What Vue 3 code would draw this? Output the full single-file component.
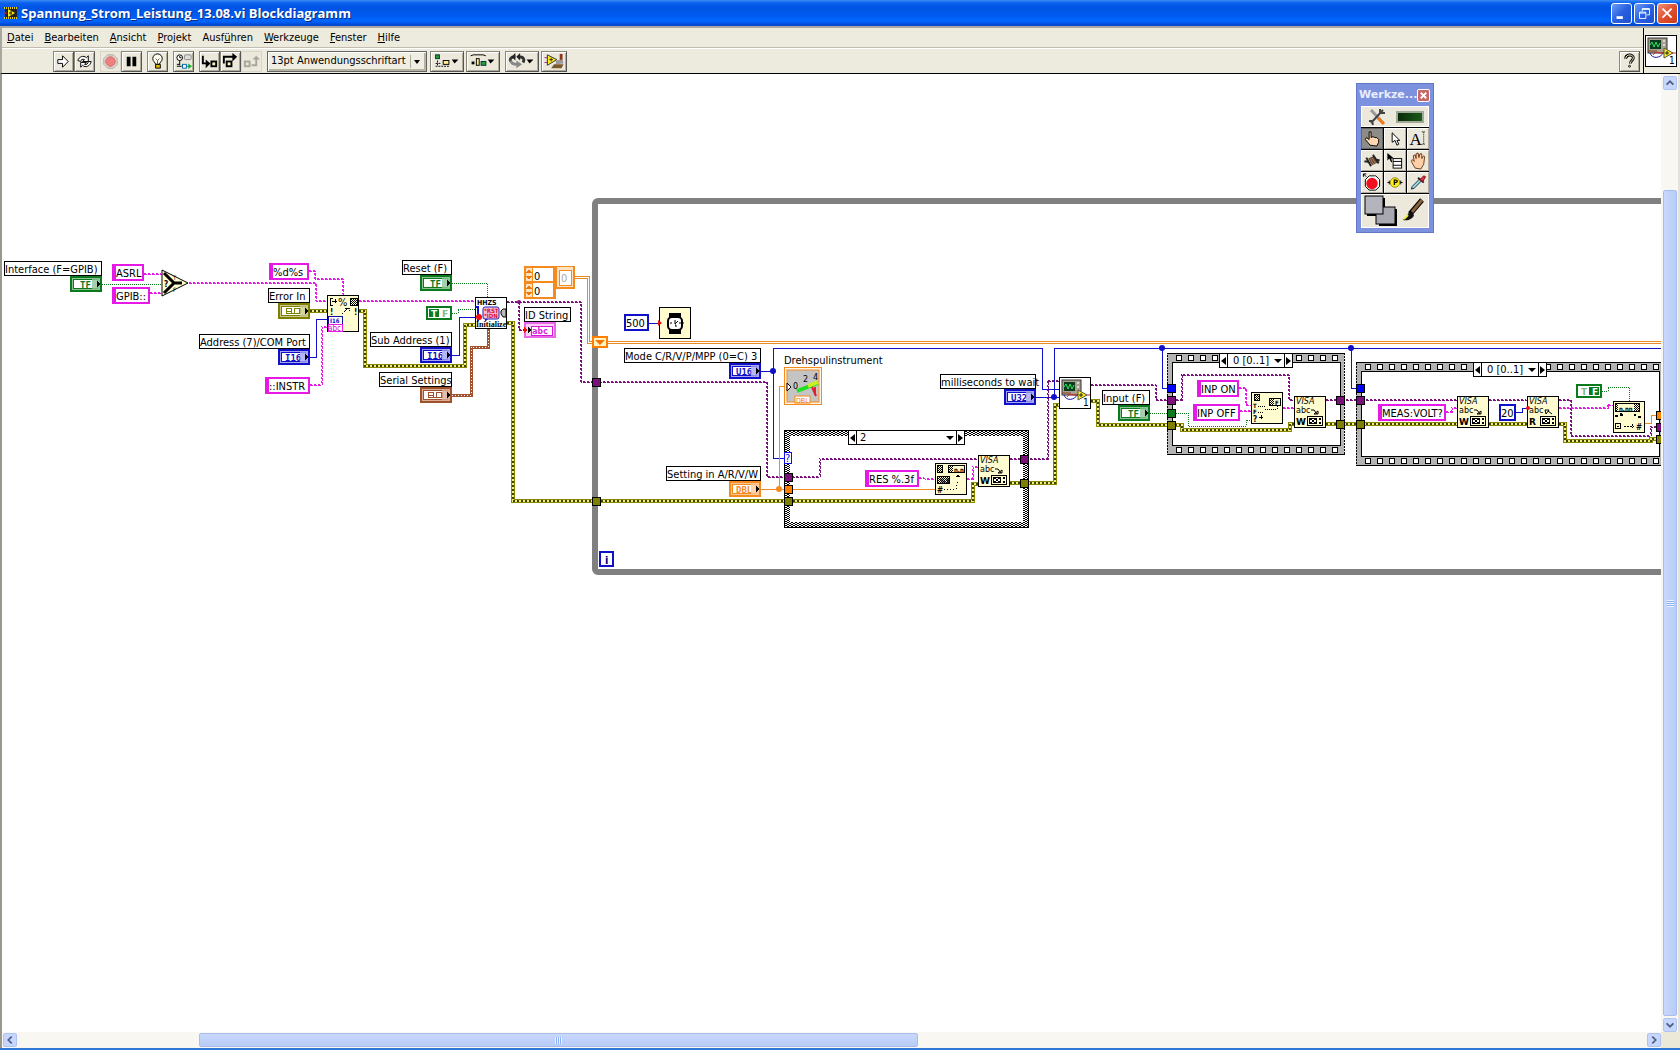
<script setup>
const menus = [
  ['D', 'atei', ''], ['B', 'earbeiten', ''], ['A', 'nsicht', ''], ['P', 'rojekt', ''],
  ['ü', 'hren', 'Ausf'], ['W', 'erkzeuge', ''], ['F', 'enster', ''], ['H', 'ilfe', '']
]

const colors = {
  str: '#e619e6', visa: '#7b0f7b', int: '#1010c8', dbl: '#f58a1f',
  bool: '#0a7a1c', err: '#808000', clu: '#a0522d'
}

const wires = [
  ['str', '144,274 162,274'], ['str', '150,293 162,293'],
  ['str', '189,283 316,283 316,301 327,301'],
  ['str', '309,271 315,271 315,279 343,279 343,295'],
  ['str', '310,385 322,385 322,327 327,327'],
  ['str', '359,301 475,301'],
  ['bool', '102,284 162,284'], ['bool', '452,283 487,283 487,297'],
  ['bool', '452,313 458,313 458,309 475,309'],
  ['int', '310,357 316,357 316,319 327,319'],
  ['int', '452,355 459,355 459,317 475,317'],
  ['err', '310,311 327,311'],
  ['err', '359,311 365,311 365,366 465,366 465,325 475,325'],
  ['clu', '452,395 471,395 471,347 488,347 488,329'],
  ['visa', '507,302 581,302 581,382 767,382 767,477 820,477 820,459 978,459'],
  ['visa', '519,302 519,330 525,330'],
  ['err', '507,323 513,323 513,501 973,501 973,484 978,484'],
  ['arr', '575,277 588,277 588,342 1661,342'],
  ['int', '649,323 660,323'],
  ['int', '761,371 773,371'],
  ['int', '785,458 773,458 773,348 1042,348 1042,389 1059,389'],
  ['dbl', '784,386 779,386 779,489'], ['dbl', '761,489 935,489'],
  ['str', '919,478 925,479 935,479'],
  ['str', '967,479 973,479 973,467 978,467'],
  ['visa', '1010,459 1048,459 1048,381 1059,381'],
  ['err', '1010,483 1055,483 1055,405 1059,405'],
  ['int', '1036,397 1059,397'], ['int', '1054,397 1054,348 1661,348'],
  ['visa', '1091,385 1156,385 1156,400 1182,400 1182,375 1289,375 1289,400 1294,400'],
  ['err', '1091,401 1098,401 1098,425 1182,425 1182,430 1290,430 1290,424 1294,424'],
  ['int', '1162,348 1162,388 1167,388'],
  ['bool', '1150,413 1188,413 1188,426 1246,426 1246,420 1251,420'],
  ['str', '1239,388 1246,388 1246,405 1251,405'], ['str', '1240,411 1251,411'],
  ['str', '1283,408 1294,408'],
  ['visa', '1326,400 1457,400'], ['err', '1326,424 1457,424'],
  ['int', '1351,348 1351,388 1357,388'],
  ['str', '1446,412 1452,412 1452,408 1457,408'],
  ['visa', '1489,400 1527,400'], ['err', '1489,424 1527,424'],
  ['int', '1516,412 1522,412 1522,408 1527,408'],
  ['visa', '1559,400 1571,400 1571,436 1651,436 1651,427 1657,427'],
  ['str', '1559,408 1608,408 1608,405 1613,405'],
  ['err', '1559,424 1565,424 1565,441 1651,441 1651,439 1657,439'],
  ['bool', '1602,391 1608,391 1608,387 1629,387 1629,401'],
  ['dbl', '1645,423 1651,423 1651,415 1657,415']
].map(([kind, pts]) => ({ kind, pts }))

const labels = [
  [4, 261, 98, 'Interface (F=GPIB)'], [268, 288, 42, 'Error In'],
  [199, 334, 111, 'Address (7)/COM Port'], [402, 260, 50, 'Reset (F)'],
  [370, 332, 82, 'Sub Address (1)'], [379, 372, 73, 'Serial Settings'],
  [524, 307, 47, 'ID String'], [624, 348, 137, 'Mode C/R/V/P/MPP (0=C) 3'],
  [666, 466, 95, 'Setting in A/R/V/W'], [940, 374, 96, 'milliseconds to wait'],
  [1102, 390, 48, 'Input (F)']
].map(([x, y, w, t]) => ({ x, y, w, t }))

const constants = [
  [112, 264, 32, 'ASRL'], [112, 287, 38, 'GPIB::'], [269, 263, 40, '%d%s'],
  [265, 377, 45, '::INSTR'], [865, 470, 54, 'RES %.3f'], [1197, 380, 42, 'INP ON'],
  [1193, 404, 47, 'INP OFF'], [1378, 404, 68, 'MEAS:VOLT?']
].map(([x, y, w, t]) => ({ x, y, w, t }))

const numbers = [[624, 314, 25, '500'], [1499, 404, 17, '20']].map(([x, y, w, t]) => ({ x, y, w, t }))

const terminals = [
  [70, 276, 'bool', 'TF', '#8fc49a'], [278, 303, 'err', '', '#c9c98f'],
  [278, 349, 'int', 'I16', '#a5a5f0'], [420, 275, 'bool', 'TF', '#8fc49a'],
  [420, 347, 'int', 'I16', '#a5a5f0'], [420, 387, 'clu', '', '#dcae96'],
  [729, 363, 'int', 'U16', '#a5a5f0'], [729, 481, 'dbl', 'DBL', '#fac898'],
  [1004, 389, 'int', 'U32', '#a5a5f0'], [1118, 405, 'bool', 'TF', '#8fc49a']
].map(([x, y, k, t, tint]) => ({ x, y, c: colors[k], k, t, tint }))

const tunnels = [
  [592, 378, 'visa'], [592, 497, 'err'], [784, 473, 'visa'], [784, 485, 'dbl'], [784, 497, 'err'],
  [1020, 455, 'visa'], [1020, 479, 'err'],
  [1167, 384, 'int'], [1167, 396, 'visa'], [1167, 409, 'bool'], [1167, 421, 'err'],
  [1336, 396, 'visa'], [1336, 420, 'err'],
  [1356, 384, 'int'], [1356, 396, 'visa'], [1356, 420, 'err'],
  [1656, 411, 'dbl'], [1656, 423, 'visa'], [1656, 435, 'err']
].map(([x, y, k]) => ({ x, y, c: k === 'int' ? '#0000ff' : k === 'dbl' ? '#ff7f00' : colors[k] }))

const dots = [[773, 371, 'int'], [1054, 397, 'int'], [1162, 348, 'int'], [1351, 348, 'int'], [779, 489, 'dbl']]
  .map(([x, y, k]) => ({ x, y, c: colors[k] }))

const strip = (x0, n, ys) => ys.flatMap(y => Array.from({ length: n }, (_, i) => ({ x: x0 + 12 * i, y })))
const holes = [...strip(1176, 14, [355, 447]), ...strip(1365, 25, [364, 458])]

const visas = [[978, 455, 'W'], [1294, 396, 'W'], [1457, 396, 'W'], [1527, 396, 'R']]
  .map(([x, y, m]) => ({ x, y, m }))
</script>

<template>
  <div class="window">
    <header class="titlebar">
      <svg class="app-icon" viewBox="0 0 14 14" width="14" height="14">
        <rect x="1" y="1" width="12" height="12" fill="#222" />
        <path d="M0 2h14M0 12h14" stroke="#e8d020" stroke-width="2" stroke-dasharray="1 1" />
        <path d="M4 3l7 4-7 4z" fill="#ffe818" /><path d="M5 7h3M7 5v4" stroke="#222" />
        <path d="M0 7h3" stroke="#e02020" />
      </svg>
      <h1>Spannung_Strom_Leistung_13.08.vi Blockdiagramm</h1>
      <div class="win-buttons">
        <button class="wb" aria-label="Minimieren"><svg viewBox="0 0 21 21"><path d="M5 15h7" stroke="#fff" stroke-width="3" /></svg></button>
        <button class="wb" aria-label="Wiederherstellen"><svg viewBox="0 0 21 21"><path d="M8 8V5h8v7h-3M8 6h8M5 9h7v7H5zM5 10h7" fill="none" stroke="#fff" stroke-width="1" /></svg></button>
        <button class="wb close" aria-label="Schließen"><svg viewBox="0 0 21 21"><path d="M5 5l10 10M15 5L5 15" stroke="#fff" stroke-width="2" /></svg></button>
      </div>
    </header>

    <div class="bars">
      <div class="bars-main">
        <nav class="menubar">
          <button v-for="m in menus" :key="m[1]">{{ m[2] }}<u>{{ m[0] }}</u>{{ m[1] }}</button>
        </nav>
        <div class="toolbar">
          <div class="group">
            <button class="tb" aria-label="Ausführen"><svg viewBox="0 0 20 20"><path d="M4 8h5V4l6 6-6 6v-4H4z" fill="#fff" stroke="#000" /></svg></button>
            <button class="tb" aria-label="Wiederholt ausführen"><svg viewBox="0 0 20 20"><g fill="#fff" stroke="#000"><path d="M3 9c1-4 6-6 9-3l2-2v6H8l2-2C8 7 6 8 6 10z" /><path d="M17 10c-1 5-6 7-9 4l-2 2v-5h6l-2 2c2 1 4-1 4-3z" /></g></svg></button>
          </div>
          <div class="group">
            <button class="tb off" aria-label="Abbrechen"><svg viewBox="0 0 20 20"><path d="M7 3h6l4 4v6l-4 4H7l-4-4V7z" fill="#e8dcd4" stroke="#a8a09a" /><circle cx="10" cy="10" r="5" fill="#f08080" stroke="#c06868" /></svg></button>
            <button class="tb" aria-label="Pause"><svg viewBox="0 0 20 20"><path d="M5 5h4v10H5zM11 5h4v10h-4z" /></svg></button>
          </div>
          <div class="group"><button class="tb" aria-label="Highlight-Funktion"><svg viewBox="0 0 20 20"><path d="M8 13c0-2-3-3-3-6a5 5 0 0 1 10 0c0 3-3 4-3 6z" fill="#fffef0" stroke="#000" /><path d="M8 7l2 2 2-2M10 9v4" fill="none" stroke="#555" /><path d="M8 13h5v4H8z" fill="#d8b800" stroke="#000" /></svg></button></div>
          <div class="group"><button class="tb" aria-label="Werte beibehalten"><svg viewBox="0 0 20 20"><circle cx="6" cy="6" r="3" fill="#fff" stroke="#000" /><path d="M6 4v2h2M6 9v5M3 15h5M3 13h3" fill="none" stroke="#000" /><rect x="11" y="3" width="7" height="5" rx="1" fill="#ddd" stroke="#888" /><path d="M8 15h9" stroke="#06f" /><path d="M15 12l4 3-4 3z" fill="#18b030" /><rect x="9" y="13" width="4" height="4" fill="#fff" stroke="#06a" /></svg></button></div>
          <div class="group">
            <button class="tb" aria-label="Hineinspringen"><svg viewBox="0 0 20 20"><path d="M3 4v8h5" fill="none" stroke="#000" stroke-width="2" /><path d="M6 8l5 4-5 5z" /><rect x="12" y="10" width="5" height="5" fill="#fff8b0" stroke="#000" stroke-width="2" /></svg></button>
            <button class="tb" aria-label="Überspringen"><svg viewBox="0 0 20 20"><path d="M3 12V5h10" fill="none" stroke="#000" stroke-width="2" /><path d="M12 1l5 4-5 5z" /><rect x="6" y="10" width="5" height="5" fill="#fff8b0" stroke="#000" stroke-width="2" /></svg></button>
            <button class="tb off" aria-label="Herausspringen"><svg viewBox="0 0 20 20"><rect x="3" y="10" width="5" height="5" fill="none" stroke="#a8a59a" stroke-width="2" /><path d="M10 14h5V7" fill="none" stroke="#a8a59a" stroke-width="2" /><path d="M11 8l4-4 4 4z" fill="#a8a59a" /></svg></button>
          </div>
          <label class="font-box"><select aria-label="Schriftart"><option>13pt Anwendungsschriftart</option></select><span class="arrow"></span></label>
          <button class="tb wide" aria-label="Ausrichten"><svg viewBox="0 0 32 20"><rect x="4" y="3" width="4" height="4" fill="#28a038" stroke="#033" /><path d="M6 9v5M4 12h5M4 15h15" stroke="#000" stroke-dasharray="2 1" /><rect x="12" y="9" width="6" height="4" fill="#ffef90" stroke="#000" /><path d="M21 8h7l-4 4z" /></svg></button>
          <button class="tb wide gap" aria-label="Verteilen"><svg viewBox="0 0 32 20"><path d="M3 4l3-1h10l3 1" fill="none" stroke="#000" /><path d="M4 10h3v3H4z" /><rect x="9" y="7" width="3" height="7" fill="#ffef90" stroke="#000" /><rect x="14" y="10" width="5" height="4" fill="#28a038" stroke="#033" /><path d="M21 8h7l-4 4z" /></svg></button>
          <button class="tb wide" aria-label="Neu ordnen"><svg viewBox="0 0 32 20"><path d="M12 5c6 0 7 3 5 6M9 5C4 5 3 7 4 10" fill="none" stroke="#333" stroke-width="3" /><path d="M9 1v8L5 5zM14 1v8L10 5z" fill="#222" /><path d="M4 9c1 4 4 4 7 4" fill="none" stroke="#888" stroke-width="3" /><path d="M10 9l6 4-6 4z" fill="#888" /><path d="M21 8h7l-4 4z" /></svg></button>
          <button class="tb mid" aria-label="Diagramm aufräumen"><svg viewBox="0 0 24 20"><path d="M2 6h4M2 11h4" stroke="#a020a0" /><path d="M5 3l10 5-10 6z" fill="#ffec20" stroke="#333" /><path d="M7 8h4M9 6v4" stroke="#333" /><path d="M18 2h3v7h-3z" fill="#8a3818" /><path d="M14 9l7-1 1 4-8 1z" fill="#999" /><path d="M12 13h10l-2 4H9z" fill="#7b5a2c" /></svg></button>
          <button class="tb help" aria-label="Hilfe"><svg viewBox="0 0 20 20"><path d="M6 7c0-5 8-5 8-1 0 3-3 3-3 6" fill="none" stroke="#000" stroke-width="3" /><path d="M6 7c0-5 8-5 8-1 0 3-3 3-3 6" fill="none" stroke="#ffffd8" /><circle cx="10" cy="15" r="1" fill="#ffd" stroke="#000" /></svg></button>
        </div>
      </div>
      <div class="vi-panel">
        <svg viewBox="0 0 32 32" width="32" height="32"><use href="#vi-icon" /></svg>
      </div>
    </div>

    <div class="work">
      <main class="canvas">
        <svg class="diagram" width="100%" height="100%">
          <defs>
            <pattern id="weave" width="4" height="4" patternUnits="userSpaceOnUse">
              <rect width="4" height="4" fill="#fff" />
              <path d="M0 0h1v1H0zM1 1h2v1H1zM3 2h1v1H3zM0 2h1v1H0zM1 3h2v1H1zM3 0h1v1H3z" />
            </pattern>
            <pattern id="dither" width="2" height="2" patternUnits="userSpaceOnUse"><path d="M0 0h1v1H0zM1 1h1v1H1z" /></pattern>
            <g id="vi-icon">
              <path d="M0 0h32v32H0z" fill="#fff" /><path d="M0 0h32v1H0zM0 31h32v1H0zM0 0h1v32H0zM31 0h1v32h-1z" />
              <rect x="3" y="3" width="19" height="15" fill="#a8a090" stroke="#333" />
              <rect x="5" y="5" width="11" height="9" fill="#0b3a1c" />
              <path d="M5 10l2-3 2 5 2-5 2 5 2-4" fill="none" stroke="#30e060" />
              <circle cx="19" cy="6" r="1" fill="#eee" /><circle cx="19" cy="10" r="1" fill="#eee" />
              <path d="M3 16h9" stroke="#8a4020" /><path d="M5 18c2 6 10 6 14-1" fill="none" stroke="#1818a0" />
              <path d="M8 20c3-5 6-1 11-2M26 18h5" fill="none" stroke="#e02020" />
              <path d="M19 13l9 5-9 5z" fill="#fff020" stroke="#554" /><path d="M20 18h4M22 16v4" stroke="#222" />
              <text x="24" y="29" class="t-one">1</text>
            </g>
            <g id="reader" shape-rendering="crispEdges">
              <path d="M13 20h16v10h-16z" /><path d="M14 21h14v8h-14z" fill="#fffcd0" />
              <path d="M15 22h8v6h-8z" /><path d="M16 23h6v4h-6z" fill="#fff" />
              <path d="M16 23h2v1h2v-1h2v1h-2v2h2v1h-2v-1h-2v1h-2v-1h2v-2h-2zM25 22h2v2h-2zM25 26h2v2h-2z" />
            </g>
          </defs>
          <g transform="translate(-2 -74)">
            <rect x="595" y="201" width="1200" height="371" rx="3" fill="none" stroke="#808080" stroke-width="6" />

            <g shape-rendering="crispEdges">
              <rect x="784" y="430" width="245" height="98" fill="#000" />
              <rect x="785" y="431" width="243" height="96" fill="url(#weave)" />
              <rect x="790" y="436" width="233" height="86" fill="#fff" />

              <g fill="#b4b4b4" stroke="#000">
                <path d="M1167 353h177v101h-177z" stroke-dasharray="2 1" /><path d="M1167 353h178M1167 454h178" />
                <rect x="1172" y="362" width="168" height="83" fill="#fff" />
                <path d="M1356 362h305v103h-305z" stroke-dasharray="2 1" /><path d="M1356 362h305M1356 465h305" />
                <rect x="1361" y="371" width="298" height="85" fill="#fff" />
              </g>
              <rect v-for="(h, i) in holes" :key="i" :x="h.x" :y="h.y" width="5" height="5" fill="#fff" stroke="#000" />

              <g v-for="(w, i) in wires" :key="'w' + i" fill="none">
                <template v-if="w.kind === 'err'">
                  <polyline :points="w.pts" stroke="#8a8a00" stroke-width="4" />
                  <polyline :points="w.pts" stroke="#f0f080" stroke-width="2" />
                  <polyline :points="w.pts" stroke="#404000" stroke-width="2" stroke-dasharray="2 2" />
                </template>
                <template v-else-if="w.kind === 'clu'">
                  <polyline :points="w.pts" stroke="#a0522d" stroke-width="3" />
                  <polyline :points="w.pts" stroke="#fff" stroke-width="1" stroke-dasharray="1 2" />
                </template>
                <template v-else-if="w.kind === 'arr'">
                  <polyline :points="w.pts" stroke="#e88a28" stroke-width="3" />
                  <polyline :points="w.pts" stroke="#fff" stroke-width="1" />
                </template>
                <template v-else-if="w.kind === 'str' || w.kind === 'visa'">
                  <polyline :points="w.pts" :stroke="colors[w.kind]" stroke-dasharray="3 1" />
                  <polyline :points="w.pts" :stroke="colors[w.kind]" stroke-dasharray="2 2" stroke-dashoffset="3" transform="translate(-1 -1)" />
                </template>
                <polyline v-else-if="w.kind === 'bool'" :points="w.pts" stroke="#0a7a1c" stroke-dasharray="1 1" />
                <polyline v-else :points="w.pts" :stroke="colors[w.kind]" />
              </g>
            </g>
            <circle v-for="(d, i) in dots" :key="'d' + i" :cx="d.x" :cy="d.y" r="3" :fill="d.c" />
            <circle cx="519" cy="302" r="2" fill="#7b0f7b" />

            <g v-for="l in labels" :key="l.t" shape-rendering="crispEdges">
              <rect :x="l.x" :y="l.y" :width="l.w" height="15" fill="#000" />
              <rect :x="l.x + 1" :y="l.y + 1" :width="l.w - 2" height="13" fill="#fff" />
              <text :x="l.x + 1" :y="l.y + 12" class="t">{{ l.t }}</text>
            </g>
            <text x="784" y="364" class="t">Drehspulinstrument</text>

            <g v-for="c in constants" :key="c.t" shape-rendering="crispEdges">
              <rect :x="c.x" :y="c.y" :width="c.w" height="17" fill="#e619e6" />
              <rect :x="c.x + 4" :y="c.y + 2" :width="c.w - 6" height="13" fill="#fff" />
              <text :x="c.x + 4" :y="c.y + 13" class="t">{{ c.t }}</text>
            </g>
            <g v-for="n in numbers" :key="n.t" shape-rendering="crispEdges">
              <rect :x="n.x" :y="n.y" :width="n.w" height="17" fill="#1010c8" />
              <rect :x="n.x + 2" :y="n.y + 2" :width="n.w - 4" height="13" fill="#fff" />
              <text :x="n.x + 2" :y="n.y + 13" class="t">{{ n.t }}</text>
            </g>

            <g v-for="(t, i) in terminals" :key="'t' + i" shape-rendering="crispEdges">
              <rect :x="t.x" :y="t.y" width="32" height="16" :fill="t.c" />
              <rect :x="t.x + 2" :y="t.y + 2" width="28" height="12" :fill="t.tint" />
              <rect :x="t.x + 3" :y="t.y + 3" width="25" height="10" :fill="t.c" />
              <rect :x="t.x + 4" :y="t.y + 4" width="23" height="8" fill="#fff" />
              <text v-if="t.t" :x="t.x + (t.k === 'bool' ? 10 : 7)" :y="t.y + 12" class="t-term" :fill="t.c">{{ t.t }}</text>
              <path v-else :transform="`translate(${t.x} ${t.y})`" d="M8 5h5v5H8zM9 8h4M14 10h2V5h5v5h-5M22 5v5h-3" fill="none" :stroke="t.c" />
              <rect :x="t.x + 22" :y="t.y + 2" width="8" height="12" :fill="t.tint" fill-opacity="0.8" />
              <path :transform="`translate(${t.x} ${t.y})`" d="M27 5v6l3-3z" fill="#000" />
            </g>

            <g shape-rendering="crispEdges">
              <rect x="524" y="322" width="32" height="16" fill="#e868e8" /><rect x="526" y="324" width="28" height="12" fill="#fbd0fb" />
              <rect x="531" y="326" width="21" height="9" fill="#fff" stroke="#d818d8" />
              <text x="532" y="334" class="t-term" fill="#d818d8">abc</text>
              <path d="M524 327v6l3-3z" fill="#f01010" /><path d="M528 327v6l3-3z" />

              <rect x="426" y="306" width="26" height="14" fill="#0a7a1c" /><rect x="428" y="308" width="22" height="10" fill="#fff" />
              <rect x="429" y="309" width="10" height="8" fill="#0a7a1c" />
              <text x="431" y="317" class="t-tf" fill="#fff">T</text><text x="442" y="317" class="t-tf" fill="#7fb98a">F</text>
              <rect x="1576" y="384" width="26" height="14" fill="#0a7a1c" /><rect x="1578" y="386" width="22" height="10" fill="#fff" />
              <rect x="1589" y="387" width="10" height="8" fill="#0a7a1c" />
              <text x="1581" y="395" class="t-tf" fill="#7fb98a">T</text><text x="1592" y="395" class="t-tf" fill="#fff">F</text>
            </g>

            <!-- array constant -->
            <g shape-rendering="crispEdges">
              <rect x="524" y="266" width="32" height="33" fill="#f58a1f" /><rect x="556" y="266" width="19" height="23" fill="#f58a1f" />
              <rect x="526" y="268" width="6" height="13" fill="#fde2c4" /><rect x="526" y="284" width="6" height="13" fill="#fde2c4" />
              <rect x="533" y="268" width="20" height="13" fill="#fff" /><rect x="533" y="283" width="20" height="14" fill="#fff" />
              <path d="M526 273l3-4 3 4zM526 276h6l-3 4zM526 289l3-4 3 4zM526 292h6l-3 4z" fill="#f07800" />
              <rect x="557" y="267" width="16" height="20" fill="#fde2c4" /><rect x="559" y="270" width="12" height="15" fill="#fff" stroke="#f58a1f" />
              <text x="534" y="280" class="t">0</text><text x="534" y="295" class="t">0</text><text x="561" y="282" class="t pale">0</text>
            </g>

            <!-- select -->
            <path d="M162 270v26l26-13z" fill="#fffcd0" stroke="#000" />
            <path d="M164 273l10 10-10 10M174 283h8" fill="none" stroke="#000" stroke-width="3" />
            <text x="164" y="287" class="t-sm b">?</text><text x="173" y="280" class="t-xs">T</text><text x="173" y="292" class="t-xs">F</text>

            <!-- format into string -->
            <g shape-rendering="crispEdges">
              <rect x="327" y="295" width="32" height="37" fill="#000" /><rect x="328" y="296" width="30" height="35" fill="#fffcd0" />
              <path d="M330 298v7M330 298h3M330 305h3M332 301h5M335 299v4" fill="none" stroke="#000" />
              <text x="338" y="306" class="t">%</text>
              <rect x="350" y="298" width="7" height="7" fill="url(#dither)" stroke="#000" />
              <text x="330" y="315" class="t-sm b">!</text><text x="354" y="315" class="t-sm b">!</text>
              <path d="M342 314l6-6M345 308h4v3" fill="none" stroke="#000" stroke-dasharray="2 1" />
              <rect x="328" y="316" width="14" height="8" fill="#fff" stroke="#1010a0" /><text x="330" y="323" class="t-xs b" fill="#1010c8">I16</text>
              <rect x="328" y="324" width="14" height="7" fill="#fff" stroke="#e619e6" /><text x="328" y="331" class="t-sm" fill="#d010d0">abc</text>
            </g>

            <!-- initialize sub-VI -->
            <g>
              <rect x="475" y="297" width="32" height="32" fill="#000" /><rect x="476" y="298" width="30" height="30" fill="#fff" />
              <text x="477" y="305" class="t-hh">HHZS</text>
              <path d="M475 307h3v14M477 309h2" fill="none" stroke="#1010c8" stroke-width="2" />
              <rect x="483" y="307" width="16" height="12" rx="2" fill="#fbc0dc" stroke="#2020c0" />
              <text x="484" y="313" class="t-xs b" fill="#d81020">*RST</text><text x="484" y="318" class="t-xs b" fill="#d81020">*IDN</text>
              <path d="M485 319v3l3-3z" fill="#2020c0" /><circle cx="479" cy="317" r="3" fill="#f01010" />
              <path d="M506 309h-3l-2 2v3l2 3h3z" fill="#bbb" stroke="#000" />
              <text x="476" y="327" class="t-init">Initialize</text>
            </g>

            <rect x="593" y="337" width="14" height="10" fill="#fff4c8" stroke="#ff7f00" stroke-width="2" /><path d="M595 340h10l-5 5z" fill="#f07800" />

            <!-- wait until next multiple -->
            <g>
              <rect x="659" y="307" width="32" height="32" fill="#000" /><rect x="660" y="308" width="30" height="30" fill="#fffcd0" />
              <path d="M669 313h12v5h-12zM669 328h12v6h-12z" />
              <rect x="668" y="317" width="14" height="13" rx="4" fill="#fff" stroke="#000" stroke-width="2" />
              <path d="M675 324v-4M675 324l3-3M675 325h1v2M670 323h2M679 323h2M683 322v2" fill="none" stroke="#000" />
              <path d="M658 320v6l4-3z" fill="#d81010" />
            </g>

            <!-- gauge terminal -->
            <g>
              <rect x="784" y="367" width="38" height="38" fill="#f58a1f" /><rect x="785" y="368" width="36" height="36" fill="#fff4e6" />
              <rect x="787" y="370" width="32" height="32" fill="#c4c4c4" stroke="#f58a1f" />
              <path d="M797 391l21-8" stroke="#20e020" stroke-width="4" /><path d="M808 386l10-4" stroke="#c8f020" stroke-width="4" />
              <path d="M812 387l4 9M815 387v8" stroke="#e02030" stroke-width="2" />
              <text x="793" y="389" class="t-dial">0</text><text x="803" y="382" class="t-dial">2</text><text x="813" y="380" class="t-dial">4</text>
              <path d="M787 383v8l4-4z" fill="#fff" stroke="#000" />
              <rect x="795" y="396" width="15" height="7" fill="#fff" stroke="#f58a1f" /><text x="796" y="403" class="t-dbl" fill="#f07800">DBL</text>
            </g>

            <!-- number to fractional string -->
            <g shape-rendering="crispEdges">
              <rect x="935" y="463" width="32" height="32" fill="#000" /><rect x="936" y="464" width="30" height="30" fill="#fffcd0" />
              <rect x="937" y="465" width="5" height="7" fill="url(#dither)" stroke="#000" />
              <rect x="948" y="465" width="16" height="7" fill="#fffcd0" stroke="#000" /><rect x="948" y="465" width="5" height="7" fill="url(#dither)" /><text x="954" y="472" class="t-xs b">n.n</text>
              <rect x="937" y="476" width="12" height="7" fill="#fffcd0" stroke="#000" /><rect x="937" y="476" width="12" height="7" fill="url(#dither)" /><text x="940" y="483" class="t-xs b">%3</text>
              <text x="937" y="493" class="t-sm b">#</text><path d="M944 489h12l2-9" fill="none" stroke="#000" stroke-dasharray="1 2" /><path d="M955 477h5l-2-3z" />
            </g>

            <!-- select string -->
            <g shape-rendering="crispEdges">
              <rect x="1251" y="392" width="32" height="32" fill="#000" /><rect x="1252" y="393" width="30" height="30" fill="#fffcd0" />
              <rect x="1254" y="394" width="5" height="6" fill="url(#dither)" stroke="#000" />
              <rect x="1269" y="398" width="11" height="7" fill="#fffcd0" stroke="#000" /><rect x="1269" y="398" width="5" height="7" fill="url(#dither)" /><text x="1275" y="405" class="t-xs b">F</text>
              <text x="1253" y="408" class="t-xs b">T</text><text x="1253" y="414" class="t-xs b">F</text><text x="1253" y="422" class="t-sm b">?</text>
              <path d="M1258 406h5l4 3h10v-3M1258 412h5l4-3" fill="none" stroke="#000" stroke-dasharray="1 1" /><path d="M1259 417h4M1261 415v4" stroke="#000" />
            </g>

            <!-- fractional string to number -->
            <g shape-rendering="crispEdges">
              <rect x="1613" y="401" width="32" height="32" fill="#000" /><rect x="1614" y="402" width="30" height="30" fill="#fffcd0" />
              <rect x="1615" y="403" width="24" height="8" fill="url(#dither)" stroke="#000" /><rect x="1618" y="404" width="16" height="7" fill="#fffcd0" /><text x="1619" y="411" class="t-xs b">n.nn</text>
              <path d="M1615 416h3M1620 415h3M1621 413v3M1634 415h2M1638 417h3" stroke="#000" stroke-width="2" />
              <circle cx="1618" cy="426" r="3" fill="none" stroke="#000" /><path d="M1617 426h2M1624 426h10M1632 424v4" stroke="#000" stroke-dasharray="2 1" />
              <text x="1636" y="430" class="t-sm b">#</text>
            </g>

            <g v-for="(v, i) in visas" :key="'v' + i" :transform="`translate(${v.x} ${v.y})`">
              <rect width="32" height="32" fill="#000" /><rect x="1" y="1" width="30" height="30" fill="#fffcd0" />
              <text x="2" y="8" class="t-visa">VISA</text><text x="2" y="17" class="t-abc">abc</text>
              <path v-if="v.m === 'W'" d="M17 14h3l3 4M20 18h4v-3z" fill="none" stroke="#000" />
              <path v-else d="M25 18l-4-3M18 14h4l-3 4z" fill="none" stroke="#000" />
              <text x="2" y="29" class="t-mode">{{ v.m }}</text><use href="#reader" />
            </g>
            <circle cx="1528" cy="408" r="2" fill="#f01010" />

            <use href="#vi-icon" x="1059" y="377" />

            <g shape-rendering="crispEdges">
              <g v-for="(t, i) in tunnels" :key="'u' + i">
                <rect :x="t.x" :y="t.y" width="9" height="9" fill="#000" /><rect :x="t.x + 1" :y="t.y + 1" width="7" height="7" :fill="t.c" />
              </g>
              <rect x="784" y="452" width="7" height="11" fill="#fff" stroke="#1010e8" /><text x="785" y="462" class="t" fill="#1010e8">?</text>
              <rect x="600" y="552" width="13" height="14" fill="#fff" stroke="#1010c8" stroke-width="2" /><text x="605" y="564" class="t b" fill="#000080">i</text>
            </g>
          </g>
        </svg>

        <div class="selector case-sel">
          <button aria-label="Vorheriger Rahmen" class="prev"></button>
          <select aria-label="Case"><option>2</option></select><i></i>
          <button aria-label="Nächster Rahmen" class="next"></button>
        </div>
        <div class="selector seq seq-one">
          <button aria-label="Vorheriger Rahmen" class="prev"></button>
          <select aria-label="Sequenz 1"><option>0 [0..1]</option></select><i></i>
          <button aria-label="Nächster Rahmen" class="next"></button>
        </div>
        <div class="selector seq seq-two">
          <button aria-label="Vorheriger Rahmen" class="prev"></button>
          <select aria-label="Sequenz 2"><option>0 [0..1]</option></select><i></i>
          <button aria-label="Nächster Rahmen" class="next"></button>
        </div>

        <aside class="palette">
          <div class="pal-title"><span>Werkze...</span><button aria-label="Schließen"><svg viewBox="0 0 12 12"><path d="M3 3l6 6M9 3L3 9" stroke="#fff" stroke-width="2" /></svg></button></div>
          <div class="pal-auto">
            <svg viewBox="0 0 20 20" width="20" height="20"><path d="M4 3l12 13" stroke="#999" stroke-width="3" /><path d="M11 11l6 6" stroke="#f07818" stroke-width="3" /><path d="M16 3L4 16" stroke="#444" stroke-width="2" /><path d="M13 2v4h5M2 14l3 0 1 4" fill="none" stroke="#444" stroke-width="2" /></svg>
            <span class="led"></span>
          </div>
          <div class="pal-grid">
            <button class="on" aria-label="Bedienen"><svg viewBox="0 0 20 20"><path d="M8 17l-5-6 1-2 3 2V3h2v6l2-1 2 1 2 0 2 2v3l-2 4z" fill="#ffd8b0" stroke="#000" /></svg></button>
            <button aria-label="Positionieren"><svg viewBox="0 0 20 20"><path d="M7 4v10l3-2 2 5 2-1-2-4h3z" fill="#fff" stroke="#000" /></svg></button>
            <button aria-label="Text bearbeiten"><svg viewBox="0 0 20 20"><text x="1" y="17" class="t-a">A</text><path d="M14 3h4M16 3v13M14 16h4" stroke="#000" stroke-dasharray="1 1" /></svg></button>
            <button aria-label="Verbinden"><svg viewBox="0 0 20 20"><path d="M6 8l6-3 4 7-6 3z" fill="#6b4a34" /><path d="M4 7l5 9M11 4l6 9M2 11h3l3 2M15 9l3 1" stroke="#222" fill="none" stroke-width="2" /><path d="M8 8l4 6M10 7l4 6" stroke="#b08060" /></svg></button>
            <button aria-label="Kontextmenü"><svg viewBox="0 0 20 20"><path d="M2 2v8l2-2 2 4 1-1-1-3h3z" /><rect x="8" y="8" width="9" height="10" fill="#fff" stroke="#000" /><path d="M8 11h9M8 15h9" stroke="#000" /></svg></button>
            <button aria-label="Verschieben"><svg viewBox="0 0 20 20"><path d="M7 18l-4-7 1-2 2 2-1-6 2-1 1 4V3l2-1 1 5 1-4h2l0 5 2-3 1 1-1 8-3 5z" fill="#ffd0a8" stroke="#6b3818" /></svg></button>
            <button aria-label="Haltepunkt"><svg viewBox="0 0 20 20"><path d="M7 3h7l4 4v7l-4 4H7l-4-4V7z" fill="#fff" stroke="#000" /><circle cx="10" cy="11" r="6" fill="#f01020" /><path d="M1 1l3 3M1 1h3M1 1v3" stroke="#000" /></svg></button>
            <button aria-label="Sonde"><svg viewBox="0 0 20 20"><path d="M2 10h16M4 8v4M16 8v4" stroke="#000" /><circle cx="10" cy="10" r="5" fill="#fff020" stroke="#998800" /><text x="8" y="13" class="t-sm b">P</text></svg></button>
            <button aria-label="Farbe übernehmen"><svg viewBox="0 0 20 20"><path d="M3 17l1-3 8-8 2 2-8 8z" fill="#90e0e8" stroke="#223" /><path d="M10 5l6 5" stroke="#223" stroke-width="2" /><path d="M12 7l4-4 2 1-3 5z" fill="#e03040" stroke="#801020" /></svg></button>
          </div>
          <div class="pal-color">
            <svg viewBox="0 0 66 32" width="66" height="32"><path d="M5 3h18v18H5zM17 14h18v17H17z" fill="#000" /><rect x="14" y="12" width="19" height="17" fill="#a8a8b0" stroke="#000" /><rect x="3" y="1" width="18" height="18" fill="#b4b4bc" stroke="#000" /><path d="M60 5l-12 14" stroke="#000" stroke-width="5" /><path d="M60 5l-10 12" stroke="#8a6038" stroke-width="3" /><path d="M49 17c-4 1-4 5-8 8 5 1 10-1 11-5z" fill="#111" /><path d="M42 24l4-4" stroke="#f0f040" stroke-width="2" /></svg>
          </div>
        </aside>
      </main>

      <div class="scroll vertical">
        <button class="sb" aria-label="Nach oben"><svg viewBox="0 0 14 14"><path d="M3 9l4-4 4 4" /></svg></button>
        <div class="before"></div><div class="thumb"><b></b></div><div class="after"></div>
        <button class="sb" aria-label="Nach unten"><svg viewBox="0 0 14 14"><path d="M3 5l4 4 4-4" /></svg></button>
      </div>
    </div>
    <div class="foot">
      <div class="scroll horizontal">
        <button class="sb" aria-label="Nach links"><svg viewBox="0 0 14 14"><path d="M9 3L5 7l4 4" /></svg></button>
        <div class="before"></div><div class="thumb"><b></b></div><div class="after"></div>
        <button class="sb" aria-label="Nach rechts"><svg viewBox="0 0 14 14"><path d="M5 3l4 4-4 4" /></svg></button>
      </div>
      <div class="corner"></div>
    </div>
  </div>
</template>

<style>
body { margin: 0; overflow: hidden; }
</style>

<style scoped>
* { box-sizing: border-box; }
button, select { font: inherit; color: inherit; padding: 0; margin: 0; border: 0; background: none; }
button svg { display: block; width: 100%; height: 100%; }
.window { display: flex; flex-direction: column; height: 100vh; background: #ece9d8; border-bottom: 2px solid #2f78d8; font: 11px/16px "DejaVu Sans Condensed", "DejaVu Sans", sans-serif; color: #000; }

.titlebar { display: flex; align-items: center; flex: none; height: 26px; padding: 0 2px 0 4px; background: linear-gradient(#3a8cf5 0, #0a60ee 3px, #0054e3 8px, #0058ee 14px, #0066ff 21px, #0048d0 25px); }
.app-icon { flex: none; margin-right: 3px; }
h1 { flex: 1; margin: 0; overflow: hidden; white-space: nowrap; color: #fff; font: bold 13px/24px "Open Sans", sans-serif; text-shadow: 1px 1px #0a2a80; }
.win-buttons { display: flex; gap: 2px; }
.wb { width: 21px; height: 21px; border: 1px solid #fff; border-radius: 3px; background: linear-gradient(135deg, #6c9cf8, #2860e0 50%, #2050d0); }
.wb.close { background: linear-gradient(135deg, #f09078, #e05030 50%, #c83c18); }

.bars { display: flex; flex: none; height: 48px; border-top: 2px solid #a8a8a0; border-bottom: 1px solid #000; border-left: 2px solid #a8a8a0; background: #edeade; }
.bars-main { display: flex; flex: 1; flex-direction: column; min-width: 0; }
.menubar { display: flex; flex: none; gap: 11px; height: 20px; padding-left: 5px; border-bottom: 1px solid #c0bcb0; }
.menubar button { white-space: nowrap; }
.toolbar { display: flex; flex: 1; align-items: center; padding-left: 51px; border-top: 1px solid #fff; }
.group { display: flex; margin-right: 5px; }
.tb { flex: none; width: 21px; height: 21px; border: 1px solid; border-color: #8a887c #555 #555 #8a887c; box-shadow: inset 1px 1px #fff, inset -1px -1px #b0ac9c; background: #ece9dc; }
.tb.off { border-color: #d8d4c8; box-shadow: none; }
.tb.wide { width: 34px; margin-right: 5px; }
.tb.wide.gap { margin-left: -3px; }
.tb.mid { width: 26px; margin-left: -3px; }
.tb.help { margin-left: auto; margin-right: 3px; }
.font-box { position: relative; flex: none; width: 160px; height: 21px; margin-right: 3px; border: 1px solid #666; box-shadow: inset 1px 1px #fff, inset -2px -2px #b8b4a4; background: #f0ede2; }
.font-box select { width: 100%; height: 100%; padding-left: 3px; appearance: none; outline: 0; }
.arrow { position: absolute; right: 4px; top: 3px; width: 12px; height: 13px; border-left: 1px solid #b0ac9c; pointer-events: none; }
.arrow::after { content: ""; position: absolute; left: 3px; top: 5px; border: 3px solid transparent; border-top: 4px solid #000; border-bottom: 0; }
.vi-panel { display: flex; align-items: center; flex: none; padding: 0 3px 0 1px; border-left: 1px solid #000; }

.work { display: flex; flex: 1; min-height: 0; border-left: 2px solid #98988e; border-right: 2px solid #e4e2dc; }
.canvas { position: relative; flex: 1; min-width: 0; overflow: hidden; background: #fff; }
.diagram { position: absolute; inset: 0; display: block; }
.t { font-size: 11px; }
.pale { fill: #aaa; }
.b { font-weight: bold; }
.t-one { font-size: 10px; }
.t-sm { font-size: 8px; }
.t-xs { font-size: 6px; }
.t-hh { font: bold 7px "DejaVu Sans Condensed", sans-serif; }
.t-dial { font: 8px "DejaVu Sans", sans-serif; }
.t-dbl { font: 7px "DejaVu Sans Condensed", sans-serif; }
.t-term { font: bold 9px "DejaVu Sans Mono", monospace; }
.t-tf { font: bold 9px "DejaVu Sans", sans-serif; }
.t-init { font: bold 8px "Liberation Serif", serif; }
.t-visa { font: italic 8px "DejaVu Sans", sans-serif; }
.t-abc { font: 8px "DejaVu Sans", sans-serif; }
.t-mode { font: bold 9px "DejaVu Sans", sans-serif; }
.t-a { font: 18px "Liberation Serif", serif; }

.selector { position: absolute; display: flex; height: 15px; border: 1px solid #000; background: #fff; line-height: 13px; }
.case-sel { left: 846px; top: 356px; width: 117px; }
.seq-one { left: 1217px; top: 279px; width: 74px; }
.seq-two { left: 1471px; top: 288px; width: 74px; }
.selector select { flex: 1; min-width: 0; height: 13px; padding-left: 3px; appearance: none; outline: 0; }
.seq select { padding-left: 5px; }
.selector i { flex: none; align-self: center; margin: 0 2px; border: 4px solid transparent; border-top: 4px solid #000; border-bottom: 0; }
.selector button { position: relative; flex: none; width: 8px; height: 13px; }
.selector .prev { border-right: 1px solid #000; }
.selector .next { border-left: 1px solid #000; }
.prev::after, .next::after { content: ""; position: absolute; left: 1px; top: 3px; border: 4px solid transparent; }
.prev::after { border-right: 5px solid #000; border-left: 0; }
.next::after { border-left: 5px solid #000; border-right: 0; }

.palette { position: absolute; left: 1354px; top: 9px; width: 78px; padding: 0 4px 4px; border: 1px solid #6478c8; background: #7d92de; }
.pal-title { display: flex; align-items: center; justify-content: space-between; height: 22px; margin: 0 -2px; color: #e8eeff; font: bold 11px/20px "DejaVu Sans", sans-serif; white-space: nowrap; }
.pal-title button { flex: none; width: 13px; height: 13px; margin-right: 3px; border: 1px solid #fff; border-radius: 2px; background: #c86868; }
.pal-auto { display: flex; align-items: center; justify-content: space-around; height: 21px; background: #ece9dc; border: 1px solid #fff; }
.led { width: 28px; height: 12px; border: 2px solid #a0a898; background: linear-gradient(90deg, #0a2c08, #1c5a18); }
.pal-grid { display: grid; grid-template-columns: repeat(3, 1fr); gap: 1px; padding: 1px 0; background: #000; }
.pal-grid button { height: 21px; border: 1px solid; border-color: #fff #b0ac9c #b0ac9c #fff; background: #ece9dc; }
.pal-grid .on { background: #8c8c88; border-color: #666; }
.pal-color { height: 34px; background: #ece9dc; border: 1px solid #fff; }
.pal-color svg { display: block; max-width: 100%; }

.scroll { display: flex; background: #f8f7f2; }
.vertical { flex: none; flex-direction: column; width: 17px; padding: 2px 1px 0 2px; }
.horizontal { flex: 1; height: 16px; padding: 1px 0 1px 1px; }
.sb { flex: none; width: 14px; height: 14px; border: 1px solid #b0c4f4; border-radius: 2px; background: #c6d6fc; }
.sb path { fill: none; stroke: #4d6185; stroke-width: 2; }
.thumb { display: flex; align-items: center; justify-content: center; border: 1px solid #a8bcf0; border-radius: 2px; }
.vertical .before { flex: 100; }
.vertical .thumb { flex: 823; background: linear-gradient(90deg, #c9d8fc, #b8ccf8); }
.vertical .after { flex: 2; }
.horizontal .before { flex: 182; }
.horizontal .thumb { flex: 718; background: linear-gradient(#c9d8fc, #b8ccf8); }
.horizontal .after { flex: 729; }
.thumb b { width: 7px; height: 7px; background: repeating-linear-gradient(90deg, #eef4fe 0 1px, #8cb0f8 1px 2px); }
.vertical .thumb b { background: repeating-linear-gradient(#eef4fe 0 1px, #8cb0f8 1px 2px); }
.foot { display: flex; flex: none; height: 16px; border-left: 2px solid #98988e; }
.corner { width: 19px; background: #ece9d8; }
</style>
